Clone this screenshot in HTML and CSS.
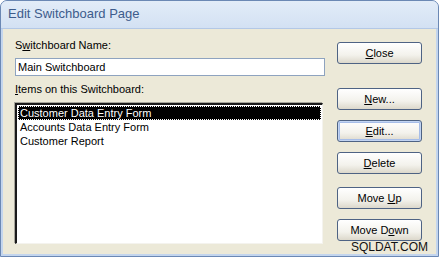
FILE: index.html
```html
<!DOCTYPE html>
<html lang="en">
<head>
    <meta charset="UTF-8">
    <title>Edit Switchboard Page</title>
    <link rel="stylesheet" href="styles.css">
</head>
<body>
    <div class="window">
        <div class="titlebar">Edit Switchboard Page</div>
        <div class="client">
            <!-- Left: name and item list -->
            <div class="fields">
                <label class="label" for="sbName">S<u>w</u>itchboard Name:</label>
                <input class="textbox" id="sbName" type="text" value="Main Switchboard">
                <div class="label items-label"><u>I</u>tems on this Switchboard:</div>
                <ul class="listbox">
                    <li class="selected">Customer Data Entry Form</li>
                    <li>Accounts Data Entry Form</li>
                    <li>Customer Report</li>
                </ul>
            </div>

            <!-- Right: command buttons -->
            <div class="buttons">
                <button class="btn btn-close"><u>C</u>lose</button>
                <button class="btn btn-new"><u>N</u>ew...</button>
                <button class="btn btn-focus"><u>E</u>dit...</button>
                <button class="btn"><u>D</u>elete</button>
                <button class="btn btn-up">Move <u>U</u>p</button>
                <button class="btn">Move D<u>o</u>wn</button>
            </div>
        </div>
        <div class="watermark">SQLDAT.COM</div>
    </div>
</body>
</html>
```

FILE: styles.css
```css
body {
    margin: 0;
    padding: 0;
    background-color: #ffffff;
    font-family: "Liberation Sans", Arial, sans-serif;
}
.window {
    position: relative;
    width: 439px;
    height: 257px;
    box-sizing: border-box;
    border: 1px solid #6b88b4;
    border-radius: 7px 7px 0 0;
    background-color: #c3d5ee;
    display: flex;
    flex-direction: column;
    overflow: hidden;
}
.titlebar {
    height: 27px;
    border-bottom: 1px solid #b3c8e6;
    background: linear-gradient(#e2ecf8, #d3e1f3);
    color: #3d5c8c;
    font-size: 13px;
    line-height: 26px;
    padding-left: 7px;
}
.client {
    flex: 1;
    margin: 0 2px 2px 2px;
    background-color: #ece9d8;
    display: flex;
    padding: 10px 14px 0 12px;
    gap: 12px;
}
.fields {
    width: 310px;
    display: flex;
    flex-direction: column;
}
.label {
    font-size: 11px;
    line-height: 13px;
    color: #000;
}
.textbox {
    margin-top: 6px;
    height: 18px;
    box-sizing: border-box;
    border: 1px solid #8ea3bf;
    padding: 0 2px;
    font-family: "Liberation Sans", Arial, sans-serif;
    font-size: 11px;
    color: #000;
    background: #fff;
    outline: none;
}
.items-label {
    margin-top: 7px;
}
.listbox {
    list-style-type: none;
    margin: 7px 0 0 0;
    padding: 1px 1px;
    width: 308px;
    height: 141px;
    box-sizing: border-box;
    background: #fff;
    border-style: solid;
    border-width: 2px 1px 1px 2px;
    border-color: #1a1a1a #f4f3ee #f4f3ee #1a1a1a;
    box-shadow: -1px -1px 0 #a7a69c;
}
.listbox li {
    font-size: 11px;
    line-height: 14px;
    padding-left: 2px;
    color: #000;
}
.listbox li.selected {
    background: #000;
    color: #fff;
    outline: 1px dotted #ffffff;
    outline-offset: -1px;
}
.buttons {
    display: flex;
    flex-direction: column;
    gap: 10px;
    padding-top: 3px;
}
.btn {
    width: 85px;
    height: 22px;
    border: 1px solid #4e6384;
    border-radius: 3px;
    background: linear-gradient(#ffffff, #f3f2ec 60%, #dcd8cb);
    font-family: "Liberation Sans", Arial, sans-serif;
    font-size: 11px;
    color: #000;
    padding: 0;
}
.btn-new {
    margin-top: 14px;
}
.btn-up {
    margin-top: 3px;
}
.btn-focus {
    box-shadow: inset 0 0 0 1px #c2d4f2, inset 0 0 0 2px #a6bde8;
}
.watermark {
    position: absolute;
    right: 10px;
    bottom: 3px;
    font-size: 12px;
    line-height: 12px;
    color: #111;
}
```
